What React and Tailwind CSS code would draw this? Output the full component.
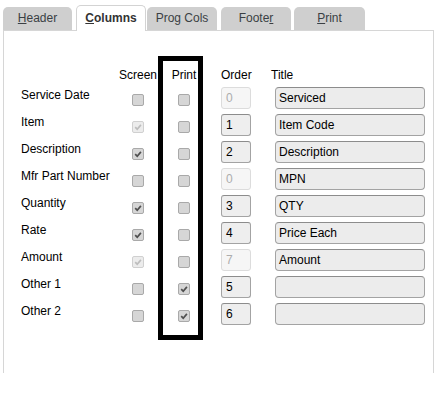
import React from "react";

const tabs = [
  { key: "header", pre: "", ul: "H", post: "eader", cls: "ml-[3px] w-[69px]" },
  { key: "columns", pre: "", ul: "C", post: "olumns", cls: "ml-[4px] w-[70px]", active: true },
  { key: "prog", pre: "Pro", ul: "g", post: " Cols", cls: "ml-[1px] w-[70px]" },
  { key: "footer", pre: "Foote", ul: "r", post: "", cls: "ml-[4px] w-[70px]" },
  { key: "print", pre: "", ul: "P", post: "rint", cls: "ml-[3px] w-[71px]" },
];

// screen/print: "off" | "on" | "dim" (disabled + checked)
const rows = [
  { label: "Service Date", screen: "off", print: "off", order: "0", orderOff: true, title: "Serviced" },
  { label: "Item", screen: "dim", print: "off", order: "1", title: "Item Code" },
  { label: "Description", screen: "on", print: "off", order: "2", title: "Description" },
  { label: "Mfr Part Number", screen: "off", print: "off", order: "0", orderOff: true, title: "MPN" },
  { label: "Quantity", screen: "on", print: "off", order: "3", title: "QTY" },
  { label: "Rate", screen: "on", print: "off", order: "4", title: "Price Each" },
  { label: "Amount", screen: "dim", print: "off", order: "7", orderOff: true, title: "Amount" },
  { label: "Other 1", screen: "off", print: "on", order: "5", title: "" },
  { label: "Other 2", screen: "off", print: "on", order: "6", title: "" },
];

function Check({ state }) {
  const dim = state === "dim";
  return (
    <div
      className={`mt-[7px] w-[12px] h-[12px] rounded-[2px] border ${
        dim ? "bg-[#ececec] border-[#d0d0d0]" : "bg-[#d6d6d6] border-[#a9a9a9]"
      }`}
    >
      {state !== "off" && (
        <svg viewBox="0 0 10 10" className="w-[10px] h-[10px]">
          <path
            d="M2.2 5.2 L4.2 7.2 L7.9 2.9"
            fill="none"
            stroke={dim ? "#bdbdbd" : "#4f4f4f"}
            strokeWidth="1.7"
          />
        </svg>
      )}
    </div>
  );
}

export default function App() {
  return (
    <div className="w-[438px] h-[395px] bg-white text-[12px] leading-[14px] text-black font-['Liberation_Sans',Arial,sans-serif]">
      {/* Tabs */}
      <div className="flex items-end h-[30px]">
        {tabs.map((t) =>
          t.active ? (
            <div
              key={t.key}
              className={`${t.cls} relative top-px z-10 h-[26px] pt-[5px] text-center font-bold text-[#333] bg-white border-x border-t border-[#d3d3d3] rounded-t-[5px]`}
            >
              {t.pre}
              <u>{t.ul}</u>
              {t.post}
            </div>
          ) : (
            <div
              key={t.key}
              className={`${t.cls} h-[23px] pt-[4px] text-center text-[#3a3f44] bg-[#cfcfcf] rounded-t-[5px]`}
            >
              {t.pre}
              <u>{t.ul}</u>
              {t.post}
            </div>
          )
        )}
      </div>

      {/* Panel */}
      <div className="relative ml-[3px] w-[431px] h-[343px] border-x border-t border-[#d6d6d6] pt-[37px] pl-[17px]">
        {/* column headers */}
        <div className="flex h-[14px]">
          <div className="w-[97px]" />
          <div className="w-[40px] text-center">Screen</div>
          <div className="w-[52px] text-center">Print</div>
          <div className="ml-[11px] w-[30px] text-center">Order</div>
          <div className="ml-[20px] w-[150px]">Title</div>
        </div>

        <div className="mt-[5px] flex flex-col gap-[5px]">
          {rows.map((r) => (
            <div key={r.label} className="flex items-start h-[22px]">
              <div className="w-[97px] pt-px whitespace-nowrap">{r.label}</div>
              <div className="w-[40px] flex justify-center">
                <Check state={r.screen} />
              </div>
              <div className="w-[52px] flex justify-center">
                <Check state={r.print} />
              </div>
              <div
                className={`ml-[11px] w-[30px] h-[22px] rounded-[3px] border pl-[4px] leading-[20px] ${
                  r.orderOff
                    ? "bg-[#f6f6f6] border-[#dcdcdc] text-[#adadad]"
                    : "bg-[#eeeeee] border-[#a3a3a3] border-t-[#8c8c8c]"
                }`}
              >
                {r.order}
              </div>
              <div className="ml-[24px] w-[150px] h-[22px] rounded-[4px] border border-[#a3a3a3] border-t-[#8c8c8c] bg-[#ececec] pl-[3px] leading-[20px]">
                {r.title}
              </div>
            </div>
          ))}
        </div>

        {/* highlight box drawn over the Print column */}
        <div className="absolute left-[154px] top-[25px] w-[45px] h-[284px] border-[5px] border-black" />
      </div>
    </div>
  );
}
